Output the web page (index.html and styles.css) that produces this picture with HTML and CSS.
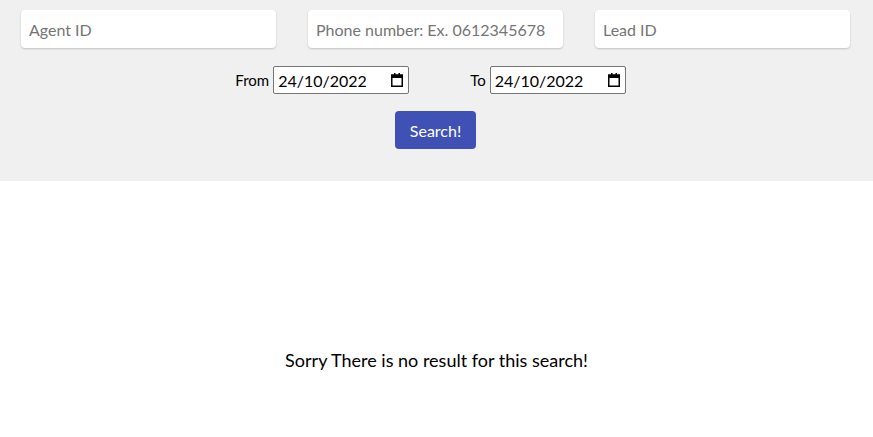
FILE: index.html
```html
<!DOCTYPE html>
<html>
<head>
<meta charset="utf-8">
<link rel="stylesheet" href="styles.css">
</head>
<body>
<div class="panel">
  <div class="fields">
    <input class="field" type="text" placeholder="Agent ID">
    <input class="field" type="text" placeholder="Phone number: Ex. 0612345678">
    <input class="field" type="text" placeholder="Lead ID">
  </div>
  <div class="dates">
    <label class="date-group">From
      <span class="date-box">
        <input class="date" type="text" value="24/10/2022">
        <svg class="cal" width="12" height="14" viewBox="0 0 12 14"><path d="M3 0h1.5v2H3zM7.5 0H9v2H7.5z" fill="#000"/><rect x="0.75" y="2" width="10.5" height="11.25" fill="none" stroke="#000" stroke-width="1.5"/><rect x="0" y="2" width="12" height="3" fill="#000"/></svg>
      </span>
    </label>
    <label class="date-group">To
      <span class="date-box">
        <input class="date" type="text" value="24/10/2022">
        <svg class="cal" width="12" height="14" viewBox="0 0 12 14"><path d="M3 0h1.5v2H3zM7.5 0H9v2H7.5z" fill="#000"/><rect x="0.75" y="2" width="10.5" height="11.25" fill="none" stroke="#000" stroke-width="1.5"/><rect x="0" y="2" width="12" height="3" fill="#000"/></svg>
      </span>
    </label>
  </div>
  <div class="actions">
    <button class="search">Search!</button>
  </div>
</div>
<div class="results">
  <p class="empty">Sorry There is no result for this search!</p>
</div>
</body>
</html>
```
FILE: styles.css
```css
html, body {
  margin: 0;
  padding: 0;
  background: #fff;
  font-family: Lato, "Open Sans", sans-serif;
  color: #000;
}
.panel {
  background: #f0f0f0;
  padding: 10px 23px 32px 21px;
}
.fields {
  display: grid;
  grid-template-columns: repeat(3, 1fr);
  gap: 32px;
}
.field {
  box-sizing: border-box;
  height: 38px;
  border: none;
  border-radius: 4px;
  background: #fff;
  box-shadow: 0 1px 2px rgba(0,0,0,0.2);
  padding: 0 8px;
  font-family: Lato, sans-serif;
  font-size: 16px;
  color: #333;
  outline: none;
  min-width: 0;
}
.field::placeholder {
  color: #757575;
}
.dates {
  display: flex;
  justify-content: center;
  gap: 61px;
  margin-top: 18px;
  padding-right: 10px;
}
.date-group {
  display: flex;
  align-items: center;
  gap: 4px;
  font-size: 15px;
}
.date-box {
  box-sizing: border-box;
  display: flex;
  align-items: center;
  width: 136px;
  height: 28px;
  border: 1px solid #767676;
  border-radius: 2px;
  background: #fff;
  padding: 0 5px 0 4px;
}
.date {
  flex: 1;
  min-width: 0;
  border: none;
  outline: none;
  padding: 0;
  background: transparent;
  font-family: Lato, sans-serif;
  font-size: 16px;
  color: #000;
}
.cal {
  flex: none;
  display: block;
}
.actions {
  display: flex;
  justify-content: center;
  margin-top: 17px;
}
.search {
  width: 81px;
  height: 38px;
  border: none;
  border-radius: 4px;
  background: #3f51b5;
  color: #fff;
  font-family: Lato, sans-serif;
  font-size: 16px;
  padding: 0;
}
.results {
  padding-top: 167px;
  text-align: center;
}
.empty {
  margin: 0;
  font-size: 18px;
  line-height: 24px;
}
```
